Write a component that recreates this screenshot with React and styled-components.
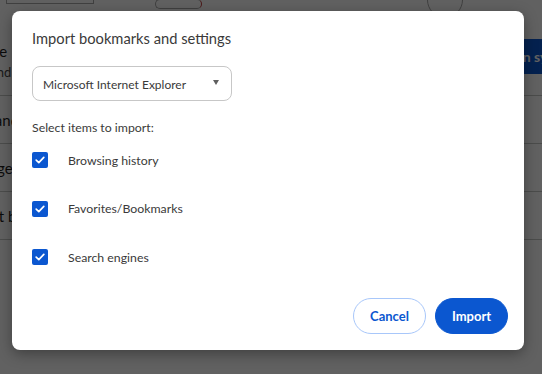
import React from "react";
import styled, { createGlobalStyle } from "styled-components";

const Global = createGlobalStyle`
  html, body { margin: 0; padding: 0; }
  body {
    width: 542px; height: 374px; overflow: hidden;
    background: #ffffff;
    font-family: Lato, "Noto Sans", Arial, sans-serif;
  }
`;

const Page = styled.div`
  position: relative;
  width: 542px;
  height: 374px;
  overflow: hidden;
  background: #ffffff;
`;

const TopBar = styled.div`
  display: flex;
  align-items: flex-start;
  height: 20px;
  padding-left: 6px;
`;

const TopBox = styled.div`
  flex: none;
  width: ${(p) => p.$w}px;
  height: ${(p) => p.$h}px;
  margin-left: ${(p) => p.$ml || 0}px;
  border: 1px solid #a8a8a8;
  border-right-color: ${(p) => p.$accent || "#a8a8a8"};
  border-radius: ${(p) => p.$r || 0}px;
  box-sizing: border-box;
  margin-top: ${(p) => p.$mt || 0}px;
`;

const Card = styled.div`
  margin: 11px 0 0 -40px;
  width: 640px;
  display: flex;
  flex-direction: column;
`;

const HeadRow = styled.div`
  display: flex;
  align-items: center;
  justify-content: space-between;
  height: 64px;
  border-bottom: 1px solid #c4c7c5;
  padding-right: 64px;
`;

const HeadText = styled.div`
  display: flex;
  flex-direction: column;
  gap: 4px;
  color: #1f1f1f;
  font-size: 15px;
  margin-top: -4px;
`;

const Sub = styled.span`
  font-size: 13px;
  color: #474747;
`;

const SyncBtn = styled.div`
  background: #0b57d0;
  color: #fff;
  font-weight: 700;
  font-size: 14px;
  height: 35px;
  padding: 0 14px;
  display: flex;
  align-items: center;
  margin-top: -14px;
  margin-right: -40px;
`;

const Row = styled.div`
  height: 47px;
  border-bottom: 1px solid #c4c7c5;
  display: flex;
  align-items: center;
  font-size: 15px;
  color: #1f1f1f;
`;

const Overlay = styled.div`
  position: absolute;
  inset: 0;
  background: rgba(0, 0, 0, 0.62);
  display: flex;
  align-items: flex-start;
  padding: 11px 0 0 12px;
`;

const Dialog = styled.div`
  width: 512px;
  height: 339px;
  box-sizing: border-box;
  background: #fff;
  border-radius: 8px;
  box-shadow: 0 4px 14px rgba(0, 0, 0, 0.35);
  padding: 17px 16px 16px 20px;
  display: flex;
  flex-direction: column;
`;

const Title = styled.h1`
  margin: 0;
  font-size: 14.7px;
  line-height: 20px;
  font-weight: 400;
  color: #3a3a3a;
`;

const Select = styled.div`
  margin-top: 18px;
  width: 200px;
  height: 35px;
  box-sizing: border-box;
  border: 1px solid #c7c7c7;
  border-radius: 8px;
  display: flex;
  align-items: center;
  justify-content: space-between;
  padding: 2px 12px 0 10px;
  font-size: 12px;
  color: #3a3a3a;
`;

const Arrow = styled.span`
  width: 0;
  height: 0;
  border-left: 3.5px solid transparent;
  border-right: 3.5px solid transparent;
  border-top: 5px solid #5f5f5f;
  margin-top: -4px;
`;

const Label = styled.div`
  margin-top: 19px;
  font-size: 12.3px;
  line-height: 16px;
  color: #3a3a3a;
`;

const List = styled.div`
  display: flex;
  flex-direction: column;
`;

const Item = styled.label`
  height: 48.5px;
  display: flex;
  align-items: center;
  gap: 20px;
  font-size: 12.3px;
  color: #3a3a3a;
`;

const Box = styled.span`
  width: 16px;
  height: 16px;
  border-radius: 2px;
  background: #0b57d0;
  display: flex;
  align-items: center;
  justify-content: center;
`;

const Footer = styled.div`
  margin-top: auto;
  display: flex;
  justify-content: flex-end;
  gap: 9px;
`;

const Button = styled.button`
  width: 73px;
  height: 36px;
  border-radius: 18px;
  font-family: inherit;
  font-size: 13px;
  font-weight: 700;
  cursor: pointer;
  border: 1px solid ${(p) => (p.$primary ? "#0b57d0" : "#a8c7fa")};
  background: ${(p) => (p.$primary ? "#0b57d0" : "#fff")};
  color: ${(p) => (p.$primary ? "#fff" : "#0b57d0")};
`;

const Check = () => (
  <Box>
    <svg width="12" height="12" viewBox="0 0 12 12">
      <path d="M2.2 6.2 L4.8 8.6 L9.8 3.4" fill="none" stroke="#fff" strokeWidth="1.7" strokeLinecap="round" strokeLinejoin="round" />
    </svg>
  </Box>
);

const items = ["Browsing history", "Favorites/Bookmarks", "Search engines"];

export default function App() {
  return (
    <Page>
      <Global />
      <TopBar>
        <TopBox $w={88} $h={5} $mt={-1} />
        <TopBox $w={47} $h={10} $ml={61} $r={8} $mt={-1} $accent="#c43b3b" />
        <TopBox $w={36} $h={36} $ml={225} $r={18} $mt={-18} />
      </TopBar>
      <Card>
        <HeadRow>
          <HeadText>
            <span>Google</span>
            <Sub>Sync and personalize</Sub>
          </HeadText>
          <SyncBtn>Turn on sync</SyncBtn>
        </HeadRow>
        <Row>Sync and Google services</Row>
        <Row>Manage your Google Account</Row>
        <Row>Import bookmarks</Row>
      </Card>
      <Overlay>
        <Dialog role="dialog">
          <Title>Import bookmarks and settings</Title>
          <Select>
            <span>Microsoft Internet Explorer</span>
            <Arrow />
          </Select>
          <Label>Select items to import:</Label>
          <List>
            {items.map((t) => (
              <Item key={t}>
                <Check />
                <span>{t}</span>
              </Item>
            ))}
          </List>
          <Footer>
            <Button>Cancel</Button>
            <Button $primary>Import</Button>
          </Footer>
        </Dialog>
      </Overlay>
    </Page>
  );
}
